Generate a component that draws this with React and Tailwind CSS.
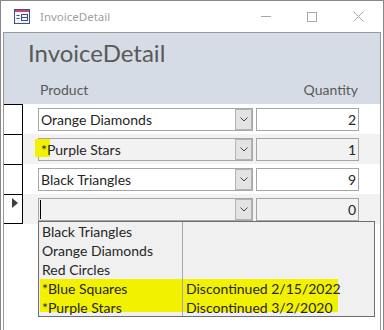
import React from 'react';

const rows = [
  { name: 'Orange Diamonds', qty: 2, alt: false },
  { name: '*Purple Stars', qty: 1, alt: true, flag: true },
  { name: 'Black Triangles', qty: 9, alt: false },
  { name: '', qty: 0, alt: true, current: true },
];

const listItems = [
  { name: 'Black Triangles', note: '' },
  { name: 'Orange Diamonds', note: '' },
  { name: 'Red Circles', note: '' },
  { name: '*Blue Squares', note: 'Discontinued 2/15/2022', hot: true },
  { name: '*Purple Stars', note: 'Discontinued 3/2/2020', hot: true, last: true },
];

function FormIcon() {
  return (
    <svg width="16" height="15" viewBox="0 0 16 15">
      <rect x="0.5" y="0.5" width="15" height="14" fill="#f4f6fa" stroke="#3b5284" />
      <rect x="1" y="1" width="14" height="2" fill="#c8467a" />
      <path d="M2.5 6.5h3M2.5 9.5h3" stroke="#3b5284" />
      <rect x="7.5" y="5.5" width="6" height="6" fill="none" stroke="#3b5284" />
      <path d="M8 8.5h5" stroke="#3b5284" />
    </svg>
  );
}

function Chevron() {
  return (
    <svg width="8" height="5" viewBox="0 0 8 5">
      <path d="M0.5 0.5l3.5 3.5 3.5-3.5" fill="none" stroke="#444" />
    </svg>
  );
}

function ProductList() {
  return (
    <div className="absolute left-[15px] top-[27px] z-10 flex h-[96px] w-[337px] border border-[#6e6e6e] bg-[#f0f0f0] text-[14px] text-[#262626]">
      <div className="w-[144px] shrink-0 border-r border-[#a8a8a8]">
        {listItems.map((it) => (
          <div
            key={it.name}
            className={`h-[19px] whitespace-nowrap pl-[2px] leading-[19px] ${
              it.hot ? 'ml-[1px]' : 'ml-[1px]'
            } ${
              it.last
                ? 'bg-[linear-gradient(to_bottom,#f2f200_14px,transparent_14px)]'
                : it.hot
                ? 'bg-[#f2f200]'
                : ''
            }`}
          >
            {it.name}
          </div>
        ))}
      </div>
      <div className="flex-1">
        {listItems.map((it) => (
          <div
            key={it.name}
            className={`h-[19px] w-[155px] whitespace-nowrap pl-[3px] leading-[19px] ${
              it.last
                ? 'bg-[linear-gradient(to_bottom,#f2f200_14px,transparent_14px)]'
                : it.hot
                ? 'bg-[#f2f200]'
                : ''
            }`}
          >
            {it.note}
          </div>
        ))}
      </div>
    </div>
  );
}

function DetailRow({ row, last }) {
  return (
    <div className="flex h-[30px]">
      <div
        className={`flex w-[19px] shrink-0 items-start border-t border-r border-black pl-[8px] pt-[3px] ${
          last ? 'border-b' : ''
        }`}
      >
        {row.current && (
          <span className="block h-0 w-0 border-y-[5px] border-l-[6px] border-y-transparent border-l-[#404040]" />
        )}
      </div>
      <div
        className={`relative flex flex-1 items-start pl-[15px] pt-[4px] ${
          row.alt ? 'bg-[#f2f2f2]' : 'bg-white'
        }`}
      >
        {row.flag && <div className="absolute left-[12px] top-[5px] h-[18px] w-[15px] bg-[#f2f200]" />}
        <div className="flex h-[23px] w-[215px] border border-[#a6a6a6]">
          <div className="flex flex-1 items-center overflow-hidden whitespace-nowrap pl-[2px]">
            {row.current ? (
              <span className="ml-[-1px] block h-[19px] w-px bg-black" />
            ) : (
              <span className="relative">{row.name}</span>
            )}
          </div>
          <div className="flex w-[17px] items-center justify-center border-l border-[#a0a0a0] bg-[#e3e3e3] outline outline-1 -outline-offset-1 outline-[#b4b4b4]">
            <Chevron />
          </div>
        </div>
        <div className="ml-[3px] flex h-[23px] w-[103px] items-center justify-end border border-[#a6a6a6] pr-[2px]">
          {row.qty}
        </div>
        {row.current && <ProductList />}
      </div>
    </div>
  );
}

export default function App() {
  return (
    <div className="h-[330px] w-[384px] overflow-hidden border-x border-t border-[#888] bg-white px-[2px] font-['Lato',sans-serif] text-[14px] text-[#262626]">
      {/* title bar */}
      <div className="flex h-[31px] items-center">
        <div className="ml-[11px]">
          <FormIcon />
        </div>
        <span className="ml-[10px] font-['Noto_Sans',sans-serif] text-[11.5px] text-[#a0a0a0]">InvoiceDetail</span>
        <div className="ml-auto flex h-full">
          <div className="flex w-[46px] items-center justify-center">
            <span className="block h-px w-[10px] bg-[#a8a8a8]" />
          </div>
          <div className="flex w-[46px] items-center justify-center">
            <span className="block h-[10px] w-[10px] border border-[#a8a8a8]" />
          </div>
          <div className="flex w-[46px] items-center justify-center">
            <svg width="11" height="11" viewBox="0 0 11 11">
              <path d="M0.5 0.5l10 10M10.5 0.5l-10 10" stroke="#a8a8a8" />
            </svg>
          </div>
        </div>
      </div>

      {/* form frame */}
      <div className="flex h-[298px] flex-col border-x border-t border-[#999]">
        <div className="h-[71px] shrink-0 bg-[#d6dce5] text-[#595959]">
          <div className="pl-[24px] pt-[5px] text-[24px] leading-[29px]">InvoiceDetail</div>
          <div className="mt-[14px] flex leading-[17px]">
            <span className="pl-[36px]">Product</span>
            <span className="ml-auto pr-[22px]">Quantity</span>
          </div>
        </div>
        <div className="flex-1 bg-white">
          {rows.map((r, i) => (
            <DetailRow key={i} row={r} last={i === rows.length - 1} />
          ))}
        </div>
      </div>
    </div>
  );
}
